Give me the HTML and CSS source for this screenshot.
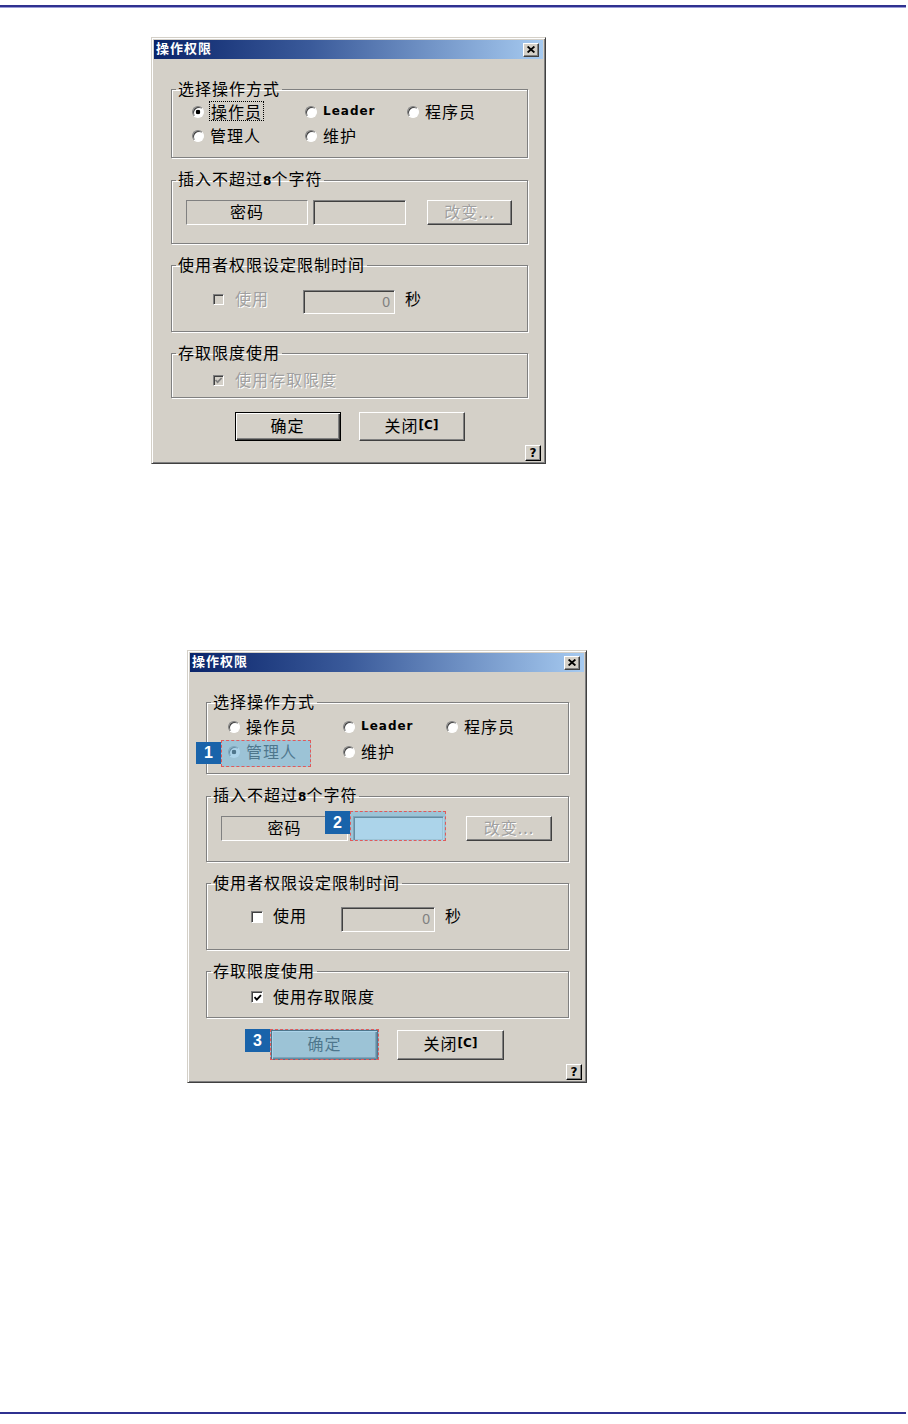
FILE: index.html
```html
<!DOCTYPE html>
<html lang="zh-CN">
<head>
  <meta charset="UTF-8" />
  <meta name="viewport" content="width=device-width, initial-scale=1.0"/>
  <title>操作权限</title>
  <link rel="stylesheet" href="styles.css">
</head>
<body>
  <div class="rule"></div>

  <!-- plain dialog -->
  <div class="dlg first">
    <div class="titlebar">
      <span class="title">操作权限</span>
      <span class="xbtn"><svg width="8" height="7" viewBox="0 0 8 7"><path d="M0.6 0.5 L7.4 6.5 M7.4 0.5 L0.6 6.5" stroke="#000" stroke-width="1.8"/></svg></span>
    </div>
    <div class="dlg-body">
      <fieldset class="grp g1">
        <legend>选择操作方式</legend>
        <div class="radios">
          <label class="opt"><i class="radio on"></i><span class="focus">操作员</span></label>
          <label class="opt"><i class="radio"></i><b class="latin">Leader</b></label>
          <label class="opt"><i class="radio"></i>程序员</label>
          <label class="opt"><i class="radio"></i>管理人</label>
          <label class="opt"><i class="radio"></i>维护</label>
        </div>
      </fieldset>
      <fieldset class="grp g2">
        <legend>插入不超过<b class="num">8</b>个字符</legend>
        <div class="pwd-row">
          <span class="static">密码</span>
          <span class="edit pwd locked"></span>
          <span class="btn small off">改变...</span>
        </div>
      </fieldset>
      <fieldset class="grp g3">
        <legend>使用者权限设定限制时间</legend>
        <div class="time-row">
          <label class="chk-label off"><i class="chk"></i>使用</label>
          <span class="edit secs">0</span>
          <span class="unit">秒</span>
        </div>
      </fieldset>
      <fieldset class="grp g4">
        <legend>存取限度使用</legend>
        <div class="access-row">
          <label class="chk-label off"><i class="chk on"><svg width="9" height="9" viewBox="0 0 9 9"><path d="M1.5 4 L3.6 6.2 L7.6 2" fill="none" stroke="#808080" stroke-width="1.7"/></svg></i>使用存取限度</label>
        </div>
      </fieldset>
      <div class="actions">
        <span class="btn big default">确定</span>
        <span class="btn big">关闭<b class="num">[C]</b></span>
      </div>
    </div>
    <div class="help-row"><span class="help">?</span></div>
  </div>

  <!-- annotated dialog -->
  <div class="dlg second">
    <div class="titlebar">
      <span class="title">操作权限</span>
      <span class="xbtn"><svg width="8" height="7" viewBox="0 0 8 7"><path d="M0.6 0.5 L7.4 6.5 M7.4 0.5 L0.6 6.5" stroke="#000" stroke-width="1.8"/></svg></span>
    </div>
    <div class="dlg-body">
      <fieldset class="grp g1">
        <legend>选择操作方式</legend>
        <div class="radios">
          <label class="opt"><i class="radio"></i>操作员</label>
          <label class="opt"><i class="radio"></i><b class="latin">Leader</b></label>
          <label class="opt"><i class="radio"></i>程序员</label>
          <label class="opt"><i class="radio on"></i>管理人<span class="callout c1"><span class="badge">1</span></span></label>
          <label class="opt"><i class="radio"></i>维护</label>
        </div>
      </fieldset>
      <fieldset class="grp g2">
        <legend>插入不超过<b class="num">8</b>个字符</legend>
        <div class="pwd-row">
          <span class="static">密码</span>
          <span class="edit pwd"><span class="callout c2"><span class="badge">2</span></span></span>
          <span class="btn small off">改变...</span>
        </div>
      </fieldset>
      <fieldset class="grp g3">
        <legend>使用者权限设定限制时间</legend>
        <div class="time-row">
          <label class="chk-label"><i class="chk"></i>使用</label>
          <span class="edit secs">0</span>
          <span class="unit">秒</span>
        </div>
      </fieldset>
      <fieldset class="grp g4">
        <legend>存取限度使用</legend>
        <div class="access-row">
          <label class="chk-label"><i class="chk on"><svg width="9" height="9" viewBox="0 0 9 9"><path d="M1.5 4.2 L3.8 6.6 L8 2.2" fill="none" stroke="#000" stroke-width="1.8"/></svg></i>使用存取限度</label>
        </div>
      </fieldset>
      <div class="actions">
        <span class="btn big default">确定<span class="callout c3"><span class="badge">3</span></span></span>
        <span class="btn big">关闭<b class="num">[C]</b></span>
      </div>
    </div>
    <div class="help-row"><span class="help">?</span></div>
  </div>

  <div class="rule bottom"></div>
</body>
</html>
```

FILE: styles.css
```css
body {
  margin: 0;
  background: #fff;
  color: #000;
  font-family: "Noto Sans CJK SC", "DejaVu Sans", sans-serif;
  font-size: 16px;
}
.rule {
  width: 906px;
  height: 2px;
  margin-top: 5px;
  background: #2f3190;
  box-shadow: 0 1px #9a9cd6;
}
.rule.bottom { margin-top: 329px; }

/* window frame */
.dlg {
  --g1: 79px; --g2: 75px; --g3: 77px; --g4: 55px;
  --row: 24px; --col1: 113px; --col2: 102px; --radio-pad: 20px; --radio-top: 1px;
  --pwd-w: 122px; --edit-w: 93px; --chk-pad: 41px; --chk: 11px;
  --act-mt: 14px; --act-gap: 18px; --btn-w: 106px; --btn-h: 29px;
  box-sizing: border-box;
  width: 395px;
  padding: 2px;
  background: #d4d0c8;
  border: 1px solid;
  border-color: #d4d0c8 #404040 #404040 #d4d0c8;
  box-shadow: inset 1px 1px #fff, inset -1px -1px #808080;
}
.dlg.first { margin: 30px 0 0 151px; }
.dlg.second {
  --g1: 82px; --g2: 77px; --g3: 77px; --g4: 57px;
  --row: 25px; --col1: 115px; --col2: 103px; --radio-pad: 21px; --radio-top: 2px;
  --pwd-w: 127px; --edit-w: 91px; --chk-pad: 44px; --chk: 12px;
  --act-mt: 12px; --act-gap: 19px; --btn-w: 107px; --btn-h: 30px;
  width: 400px;
  margin: 186px 0 0 187px;
}

.titlebar {
  height: 19px;
  display: flex;
  align-items: center;
  justify-content: space-between;
  padding: 0 4px 0 2px;
  background: linear-gradient(90deg, #0a246a, #3a5a9a 40%, #a6caf0);
}
.title {
  color: #fff;
  font-size: 13px;
  font-weight: 700;
  letter-spacing: 1px;
  line-height: 16px;
  padding-bottom: 3px;
}
.xbtn {
  box-sizing: border-box;
  width: 16px;
  height: 14px;
  display: flex;
  align-items: center;
  justify-content: center;
  background: #d4d0c8;
  border: 1px solid;
  border-color: #fff #404040 #404040 #fff;
  box-shadow: inset -1px -1px #808080;
}

.dlg-body {
  display: flex;
  flex-direction: column;
  gap: 11px;
  padding: 20px 15px 0 17px;
}
.dlg.second .dlg-body { padding-left: 16px; }

/* group boxes */
.grp {
  box-sizing: border-box;
  min-width: 0;
  margin: 0;
  padding: 0;
  border: 1px solid #808080;
  box-shadow: inset 1px 1px #fff, 1px 1px #fff;
}
.g1 { height: var(--g1); }
.g2 { height: var(--g2); }
.g3 { height: var(--g3); }
.g4 { height: var(--g4); }
.grp legend {
  margin-left: 4px;
  padding: 0 2px 2px;
  line-height: 18px;
  letter-spacing: 1px;
}
.num {
  font-family: "DejaVu Sans", sans-serif;
  font-size: 12px;
  font-weight: 700;
  letter-spacing: 0;
}

.radios {
  display: grid;
  grid-template-columns: var(--col1) var(--col2) auto;
  grid-auto-rows: var(--row);
  align-items: center;
  padding: var(--radio-top) 0 0 var(--radio-pad);
}
.opt {
  position: relative;
  display: flex;
  align-items: center;
  gap: 6px;
  padding-bottom: 2px;
  letter-spacing: 1px;
  white-space: nowrap;
  line-height: 18px;
}
.latin {
  font-family: "DejaVu Sans", sans-serif;
  font-size: 12px;
  letter-spacing: 1px;
}
.radio {
  box-sizing: border-box;
  flex: none;
  width: 12px;
  height: 12px;
  margin-top: 2px;
  border-radius: 50%;
  background: #fff;
  border: 1px solid;
  border-color: #808080 #fff #fff #808080;
  box-shadow: inset 1px 1px #404040;
}
.radio.on { background: radial-gradient(circle, #000 0 2px, #fff 2.6px); }
.focus { outline: 1px dotted #000; padding: 0 1px; }

/* sunken / raised pieces */
.static {
  box-sizing: border-box;
  width: var(--pwd-w);
  height: 25px;
  display: flex;
  align-items: center;
  justify-content: center;
  padding-bottom: 3px;
  letter-spacing: 1px;
  border: 1px solid;
  border-color: #808080 #fff #fff #808080;
}
.edit {
  position: relative;
  box-sizing: border-box;
  background: #fff;
  border: 1px solid;
  border-color: #808080 #fff #fff #808080;
  box-shadow: inset 1px 1px #404040, inset -1px -1px #d4d0c8;
}
.edit.locked { background: #d4d0c8; }
.pwd-row {
  display: flex;
  align-items: center;
  padding: 8px 0 0 14px;
}
.edit.pwd { width: var(--edit-w); height: 25px; margin-left: 5px; }
.btn {
  position: relative;
  box-sizing: border-box;
  display: flex;
  align-items: center;
  justify-content: center;
  padding-bottom: 4px;
  letter-spacing: 1px;
  background: #d4d0c8;
  border: 1px solid;
  border-color: #fff #404040 #404040 #fff;
  box-shadow: inset -1px -1px #808080;
}
.btn.small { width: 85px; height: 25px; margin-left: 21px; }
.dlg.second .btn.small { width: 86px; margin-left: 22px; }
.btn.off { color: #a0a0a0; text-shadow: 1px 1px #fff; }
.btn.big { width: var(--btn-w); height: var(--btn-h); }
.btn.default {
  border-color: #000;
  box-shadow: inset 1px 1px #fff, inset -1px -1px #404040, inset -2px -2px #808080;
}

.time-row {
  display: flex;
  align-items: center;
  height: 24px;
  padding: 15px 0 0 var(--chk-pad);
}
.dlg.second .time-row { padding-top: 14px; height: 25px; }
.access-row {
  display: flex;
  align-items: center;
  height: 20px;
  padding: 7px 0 0 var(--chk-pad);
}
.dlg.second .access-row { padding-top: 6px; }
.chk-label {
  width: 90px;
  display: flex;
  align-items: center;
  gap: calc(22px - var(--chk));
  padding-bottom: 3px;
  letter-spacing: 1px;
  line-height: 18px;
}
.time-row .chk-label { margin-bottom: 6px; }
.access-row .chk-label { width: auto; }
.chk-label.off { color: #a0a0a0; text-shadow: 1px 1px #fff; }
.chk {
  box-sizing: border-box;
  flex: none;
  width: var(--chk);
  height: var(--chk);
  margin-top: 3px;
  display: flex;
  align-items: center;
  justify-content: center;
  background: #fff;
  border: 1px solid;
  border-color: #808080 #fff #fff #808080;
  box-shadow: inset 1px 1px #404040;
}
.chk-label.off .chk { background: #d4d0c8; }
.edit.secs {
  width: 92px;
  height: 24px;
  padding-right: 4px;
  text-align: right;
  background: #d4d0c8;
  color: #808080;
  font: 14px/22px "Liberation Sans", sans-serif;
}
.dlg.second .edit.secs { width: 94px; height: 25px; }
.unit { margin: 0 0 9px 10px; line-height: 18px; }

.actions {
  display: flex;
  justify-content: center;
  gap: var(--act-gap);
  margin-top: calc(var(--act-mt) - 11px);
}
.help-row {
  display: flex;
  justify-content: flex-end;
  padding: 4px 2px 0 0;
}
.help {
  box-sizing: border-box;
  width: 16px;
  height: 16px;
  display: flex;
  align-items: center;
  justify-content: center;
  font: 700 12px "DejaVu Sans", sans-serif;
  border: 1px solid;
  border-color: #fff #000 #000 #fff;
  box-shadow: inset -1px -1px #808080;
}

/* numbered callouts */
.callout {
  position: absolute;
  box-sizing: border-box;
  background: rgba(124, 187, 222, 0.63);
  border: 1px dashed #e05a5a;
}
.callout.c1 { left: -7px; top: -2px; width: 90px; height: 27px; }
.callout.c2 { left: -4px; top: -6px; width: 96px; height: 30px; }
.callout.c3 { left: -2px; top: -2px; right: -2px; bottom: -1px; }
.badge {
  position: absolute;
  right: calc(100% + 1px);
  top: -1px;
  width: 25px;
  height: 23px;
  display: flex;
  align-items: center;
  justify-content: center;
  background: #1963aa;
  color: #fff;
  font: 700 16px "Liberation Sans", sans-serif;
  letter-spacing: 0;
  text-shadow: none;
}
.c1 .badge { top: 1px; height: 22px; }
```
